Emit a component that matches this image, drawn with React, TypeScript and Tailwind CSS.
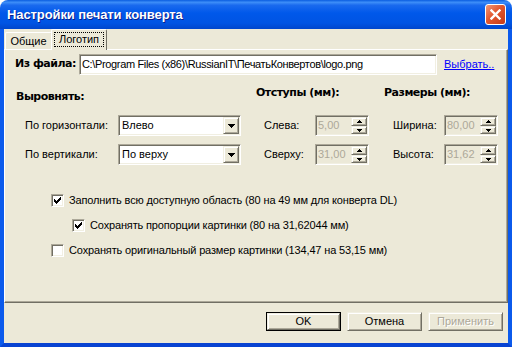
import React from 'react'

const sunken =
  'border border-t-[#ACA899] border-l-[#ACA899] border-r-white border-b-white shadow-[inset_1px_1px_0_#716F64,inset_-1px_-1px_0_#F1EFE2]'
const raised =
  'border border-t-[#F1EFE2] border-l-[#F1EFE2] border-r-[#716F64] border-b-[#716F64] shadow-[inset_1px_1px_0_#ffffff,inset_-1px_-1px_0_#ACA899]'

function Tri({ up = false, w = 7 }: { up?: boolean; w?: number }) {
  const h = Math.ceil(w / 2)
  const pts = up ? `0,${h} ${w},${h} ${w / 2},0` : `0,0 ${w},0 ${w / 2},${h}`
  return (
    <svg width={w} height={h} viewBox={`0 0 ${w} ${h}`} shapeRendering="crispEdges">
      <polygon points={pts} fill="#000" />
    </svg>
  )
}

function Combo({ value }: { value: string }) {
  return (
    <div className={`${sunken} bg-white w-[123px] h-[21px] p-[1px] flex`}>
      <span className="flex-1 pl-[2px] leading-[17px]">{value}</span>
      <div className={`${raised} bg-[#ECE9D8] w-[16px] h-[17px] flex items-center justify-center`}>
        <Tri />
      </div>
    </div>
  )
}

function Spin({ value }: { value: string }) {
  return (
    <div className={`${sunken} bg-[#ECE9D8] w-[54px] h-[21px] p-[1px] flex`}>
      <span className="flex-1 pl-[1px] leading-[17px] text-[#ACA899]">{value}</span>
      <div className="flex flex-col w-[16px]">
        <div className={`${raised} bg-[#ECE9D8] h-[9px] flex items-center justify-center`}>
          <Tri up w={5} />
        </div>
        <div className={`${raised} bg-[#ECE9D8] h-[8px] flex items-center justify-center`}>
          <Tri w={5} />
        </div>
      </div>
    </div>
  )
}

function Check({ checked }: { checked?: boolean }) {
  const cols = [2, 3, 4, 3, 2, 1, 0]
  return (
    <span className={`${sunken} bg-white w-[13px] h-[13px] flex items-center justify-center shrink-0`}>
      {checked && (
        <svg width="7" height="7" viewBox="0 0 7 7" shapeRendering="crispEdges">
          {cols.map((y, x) => (
            <rect key={x} x={x} y={y} width="1" height="3" fill="#000" />
          ))}
        </svg>
      )}
    </span>
  )
}

function Btn({ label, def, disabled }: { label: string; def?: boolean; disabled?: boolean }) {
  return (
    <div className={`w-[75px] h-[19px] ${def ? 'border border-black' : ''}`}>
      <div
        className={`${raised} bg-[#ECE9D8] w-full h-full flex items-center justify-center ${
          disabled ? 'text-[#ACA899] [text-shadow:1px_1px_0_#ffffff]' : ''
        }`}
      >
        {label}
      </div>
    </div>
  )
}

export default function App() {
  return (
    <div className="w-[512px] h-[347px] bg-white font-['Liberation_Sans',Arial,sans-serif] text-[11px] text-black">
      <div className="w-full h-full flex flex-col rounded-t-[8px] overflow-hidden">
        {/* title bar */}
        <div className="h-[29px] shrink-0 flex items-center justify-between pl-[7px] pr-[6px] bg-[linear-gradient(to_bottom,#0A5DE0_0%,#3D8EF8_8%,#1A6AEE_18%,#0058EA_45%,#0054E3_80%,#0046CC_100%)]">
          <span className="text-white font-bold text-[13px] tracking-[-0.1px] [text-shadow:1px_1px_0_#0A1E8C]">
            Настройки печати конверта
          </span>
          <div className="w-[21px] h-[21px] rounded-[3px] border border-white bg-[linear-gradient(to_bottom_right,#F19878,#E2572F_45%,#C63A17)] flex items-center justify-center">
            <svg width="11" height="11" viewBox="0 0 11 11">
              <path d="M1.5 1.5 L9.5 9.5 M9.5 1.5 L1.5 9.5" stroke="#fff" strokeWidth="2.4" strokeLinecap="square" />
            </svg>
          </div>
        </div>

        {/* client area */}
        <div className="flex-1 flex flex-col bg-[#ECE9D8] border-x-4 border-b-4 border-x-[#0B5AEC] border-b-[#0843D2]">
          {/* tabs */}
          <div className="h-[20px] flex items-end pl-[1px] relative z-10">
            <div className="w-[47px] h-[17px] border-t border-l border-white border-r border-r-[#716F64] rounded-t-[2px] flex items-center justify-center pt-[1px]">
              Общие
            </div>
            <div className="w-[56px] h-[21px] -ml-[1px] -mb-[1px] bg-[#ECE9D8] border-t border-l border-white border-r border-r-[#716F64] rounded-t-[2px] flex items-center justify-center p-[2px] pb-[3px]">
              <span className="w-full h-full flex items-center justify-center border border-dotted border-black">
                Логотип
              </span>
            </div>
          </div>

          {/* panel */}
          <div className="h-[254px] border border-white border-r-[#716F64] border-b-[#716F64] shadow-[inset_-1px_-1px_0_#ACA899] pt-[4px]">
            <div className="flex items-center h-[21px]">
              <span className="ml-[10px] w-[64px] font-bold font-['DejaVu_Sans',sans-serif] text-[11px] tracking-[-0.5px]">
                Из файла:
              </span>
              <div className={`${sunken} bg-white w-[358px] h-[21px] flex items-center pl-[2px] tracking-[-0.35px]`}>
                C:\Program Files (x86)\RussianIT\ПечатьКонвертов\logo.png
              </div>
              <span className="ml-[7px] text-[#0000FF] underline">Выбрать..</span>
            </div>

            <div className="mt-[11px] flex">
              {/* align */}
              <div className="ml-[11px] w-[227px]">
                <div className="h-[29px] pt-[4px] font-bold font-['DejaVu_Sans',sans-serif] leading-[13px] tracking-[-0.5px]">
                  Выровнять:
                </div>
                <div className="h-[21px] flex items-center pl-[9px]">
                  <span className="w-[93px]">По горизонтали:</span>
                  <Combo value="Влево" />
                </div>
                <div className="mt-[8px] h-[21px] flex items-center pl-[9px]">
                  <span className="w-[93px]">По вертикали:</span>
                  <Combo value="По верху" />
                </div>
              </div>

              {/* margins */}
              <div className="ml-[13px] w-[113px]">
                <div className="h-[29px] font-bold font-['DejaVu_Sans',sans-serif] leading-[13px] tracking-[-0.5px]">
                  Отступы (мм):
                </div>
                <div className="h-[21px] flex items-center pl-[8px]">
                  <span className="w-[51px]">Слева:</span>
                  <Spin value="5,00" />
                </div>
                <div className="mt-[8px] h-[21px] flex items-center pl-[8px]">
                  <span className="w-[51px]">Сверху:</span>
                  <Spin value="31,00" />
                </div>
              </div>

              {/* sizes */}
              <div className="ml-[15px] w-[114px]">
                <div className="h-[29px] font-bold font-['DejaVu_Sans',sans-serif] leading-[13px] tracking-[-0.5px]">
                  Размеры (мм):
                </div>
                <div className="h-[21px] flex items-center pl-[9px]">
                  <span className="w-[51px]">Ширина:</span>
                  <Spin value="80,00" />
                </div>
                <div className="mt-[8px] h-[21px] flex items-center pl-[9px]">
                  <span className="w-[51px]">Высота:</span>
                  <Spin value="31,62" />
                </div>
              </div>
            </div>

            <div className="mt-[29px] flex flex-col gap-[12px] tracking-[-0.15px]">
              <label className="ml-[46px] h-[13px] flex items-center gap-[5px]">
                <Check checked />
                <span>Заполнить всю доступную область (80 на 49 мм для конверта DL)</span>
              </label>
              <label className="ml-[67px] h-[13px] flex items-center gap-[5px]">
                <Check checked />
                <span>Сохранять пропорции картинки (80 на 31,62044 мм)</span>
              </label>
              <label className="ml-[46px] h-[13px] flex items-center gap-[5px]">
                <Check />
                <span>Сохранять оригинальный размер картинки (134,47 на 53,15 мм)</span>
              </label>
            </div>
          </div>

          {/* buttons */}
          <div className="mt-[9px] flex justify-end gap-[6px] pr-[5px]">
            <Btn label="OK" def />
            <Btn label="Отмена" />
            <Btn label="Применить" disabled />
          </div>
        </div>
      </div>
    </div>
  )
}
